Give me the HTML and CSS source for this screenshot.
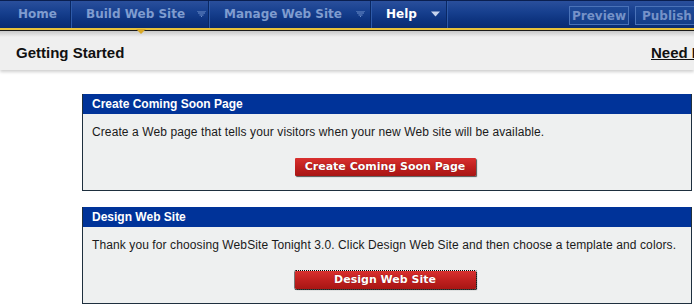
FILE: index.html
```html
<!DOCTYPE html>
<html>
<head>
<meta charset="utf-8">
<link rel="stylesheet" href="styles.css">
</head>
<body>
<div class="nav">
  <div class="tab tab-home">Home</div>
  <div class="tab tab-build">Build Web Site <span class="arr"><svg width="9" height="6" viewBox="0 0 9 6"><path d="M0 0h9M1 2h7M2.5 4h4M4 5.5h1" stroke="currentColor" stroke-width="1"/></svg></span></div>
  <div class="tab tab-manage">Manage Web Site <span class="arr"><svg width="9" height="6" viewBox="0 0 9 6"><path d="M0 0h9M1 2h7M2.5 4h4M4 5.5h1" stroke="currentColor" stroke-width="1"/></svg></span></div>
  <div class="tab tab-help">Help <span class="arr"><svg width="9" height="6" viewBox="0 0 9 6"><path d="M0 0.5h9L4.5 5.5z" fill="currentColor"/></svg></span></div>
  <div class="spacer"></div>
  <div class="nbtn nbtn-preview">Preview</div>
  <div class="nbtn nbtn-publish">Publish Web Site</div>
  <div class="pointer"></div>
</div>
<div class="subbar">
  <h1 class="title">Getting Started</h1>
  <a class="help">Need Help?</a>
</div>
<div class="content">
  <div class="panel">
    <div class="panel-head">Create Coming Soon Page</div>
    <div class="panel-body">
      <p>Create a Web page that tells your visitors when your new Web site will be available.</p>
      <div class="btn-row"><button class="btn">Create Coming Soon Page</button></div>
    </div>
  </div>
  <div class="panel">
    <div class="panel-head">Design Web Site</div>
    <div class="panel-body">
      <p>Thank you for choosing WebSite Tonight 3.0. Click Design Web Site and then choose a template and colors.</p>
      <div class="btn-row"><button class="btn btn-focus">Design Web Site</button></div>
    </div>
  </div>
</div>
</body>
</html>
```

FILE: styles.css
```css
html, body { margin: 0; padding: 0; background: #fff; overflow: hidden; }
body { width: 694px; height: 308px; font-family: "Liberation Sans", Arial, sans-serif; }

.nav {
  position: relative;
  height: 27px;
  display: flex;
  align-items: stretch;
  background: linear-gradient(#2a4f9c 0%, #17408f 40%, #0e3480 70%, #0b2c70 100%);
  border-top: 1px solid #0a1f50;
  border-bottom: 2px solid #e8c23a;
  box-shadow: 0 1px 0 #1a1a1a;
  font-family: "DejaVu Sans", Verdana, sans-serif;
  font-weight: bold;
  font-size: 12px;
}
.tab {
  flex-shrink: 0;
  display: flex;
  align-items: center;
  color: #7f9ccf;
  border-right: 1px solid #0a2864;
  box-shadow: 1px 0 0 #2e5aa8;
  white-space: nowrap;
  padding-bottom: 1px;
  box-sizing: border-box;
}
.tab-home { width: 71px; padding-left: 18px; }
.tab-build { width: 138px; padding-left: 15px; }
.tab-manage { width: 162px; padding-left: 15px; }
.tab-help { width: 76px; padding-left: 15px; color: #fff; }
.arr { display: inline-flex; margin-left: 12px; color: #6f8fca; }
.tab-manage .arr { margin-left: 14px; }
.tab-help .arr { margin-left: 14px; color: #c7d4ee; }
.spacer { flex: 1; }
.nbtn {
  flex-shrink: 0;
  align-self: center;
  margin-top: 2px;
  height: 19px;
  display: flex;
  align-items: center;
  padding: 0 6px;
  border: 1px solid #4a72b8;
  background: linear-gradient(#1f4a98, #143d88);
  color: #7592c8;
  font-size: 12px;
  white-space: nowrap;
  box-sizing: border-box;
}
.nbtn-preview { margin-right: 6px; width: 60px; justify-content: center; }
.nbtn-publish { width: 120px; margin-right: -61px; }
.pointer {
  position: absolute;
  left: 136px;
  bottom: -6px;
  width: 0; height: 0;
  border-left: 5px solid transparent;
  border-right: 5px solid transparent;
  border-top: 5px solid #d9a826;
}

.subbar {
  margin-top: 1px;
  height: 36px;
  display: flex;
  align-items: center;
  background: linear-gradient(#c8c8c8 0px, #e2e2e2 4px, #efefef 6px, #efefef 100%);
  box-shadow: 0 2px 3px #d0d0d0;
  padding-top: 3px;
  padding-left: 16px;
  white-space: nowrap;
  overflow: hidden;
}
.title { flex: 0 0 635px; margin: 0; font-size: 15px; font-weight: bold; color: #111; font-family: "Liberation Sans", Arial, sans-serif; }
.help { flex-shrink: 0; font-size: 15px; font-weight: bold; color: #111; text-decoration: underline; font-family: "Liberation Sans", Arial, sans-serif; }

.content {
  padding: 24px 4px 0 82px;
  display: flex;
  flex-direction: column;
  gap: 16px;
}
.panel {
  width: 608px;
  border: 1px solid #1e2f3e;
  border-top: none;
  background: #eef0f0;
}
.panel-head {
  height: 20px;
  line-height: 20px;
  background: #003399;
  color: #fff;
  font-weight: bold;
  font-size: 12px;
  padding-left: 9px;
}
.panel-body { padding: 11px 9px 14px; }
.panel-body p { margin: 0; font-size: 12px; color: #1a1a1a; line-height: 14px; letter-spacing: 0.1px; }
.btn-row { display: flex; justify-content: center; padding-top: 19px; padding-right: 4px; }
.btn {
  width: 181px;
  height: 18px;
  border: none;
  border-radius: 1px;
  background: linear-gradient(#d8302e 0%, #c0201f 50%, #a81614 100%);
  box-shadow: 1px 1px 1px #555;
  color: #fff;
  font-family: "DejaVu Sans", Verdana, sans-serif;
  font-weight: bold;
  font-size: 11px;
  padding: 0;
  line-height: 18px;
  text-shadow: 0 0 1px #700;
}
.btn-focus { outline: 1px dotted #000; outline-offset: 0; }
```
